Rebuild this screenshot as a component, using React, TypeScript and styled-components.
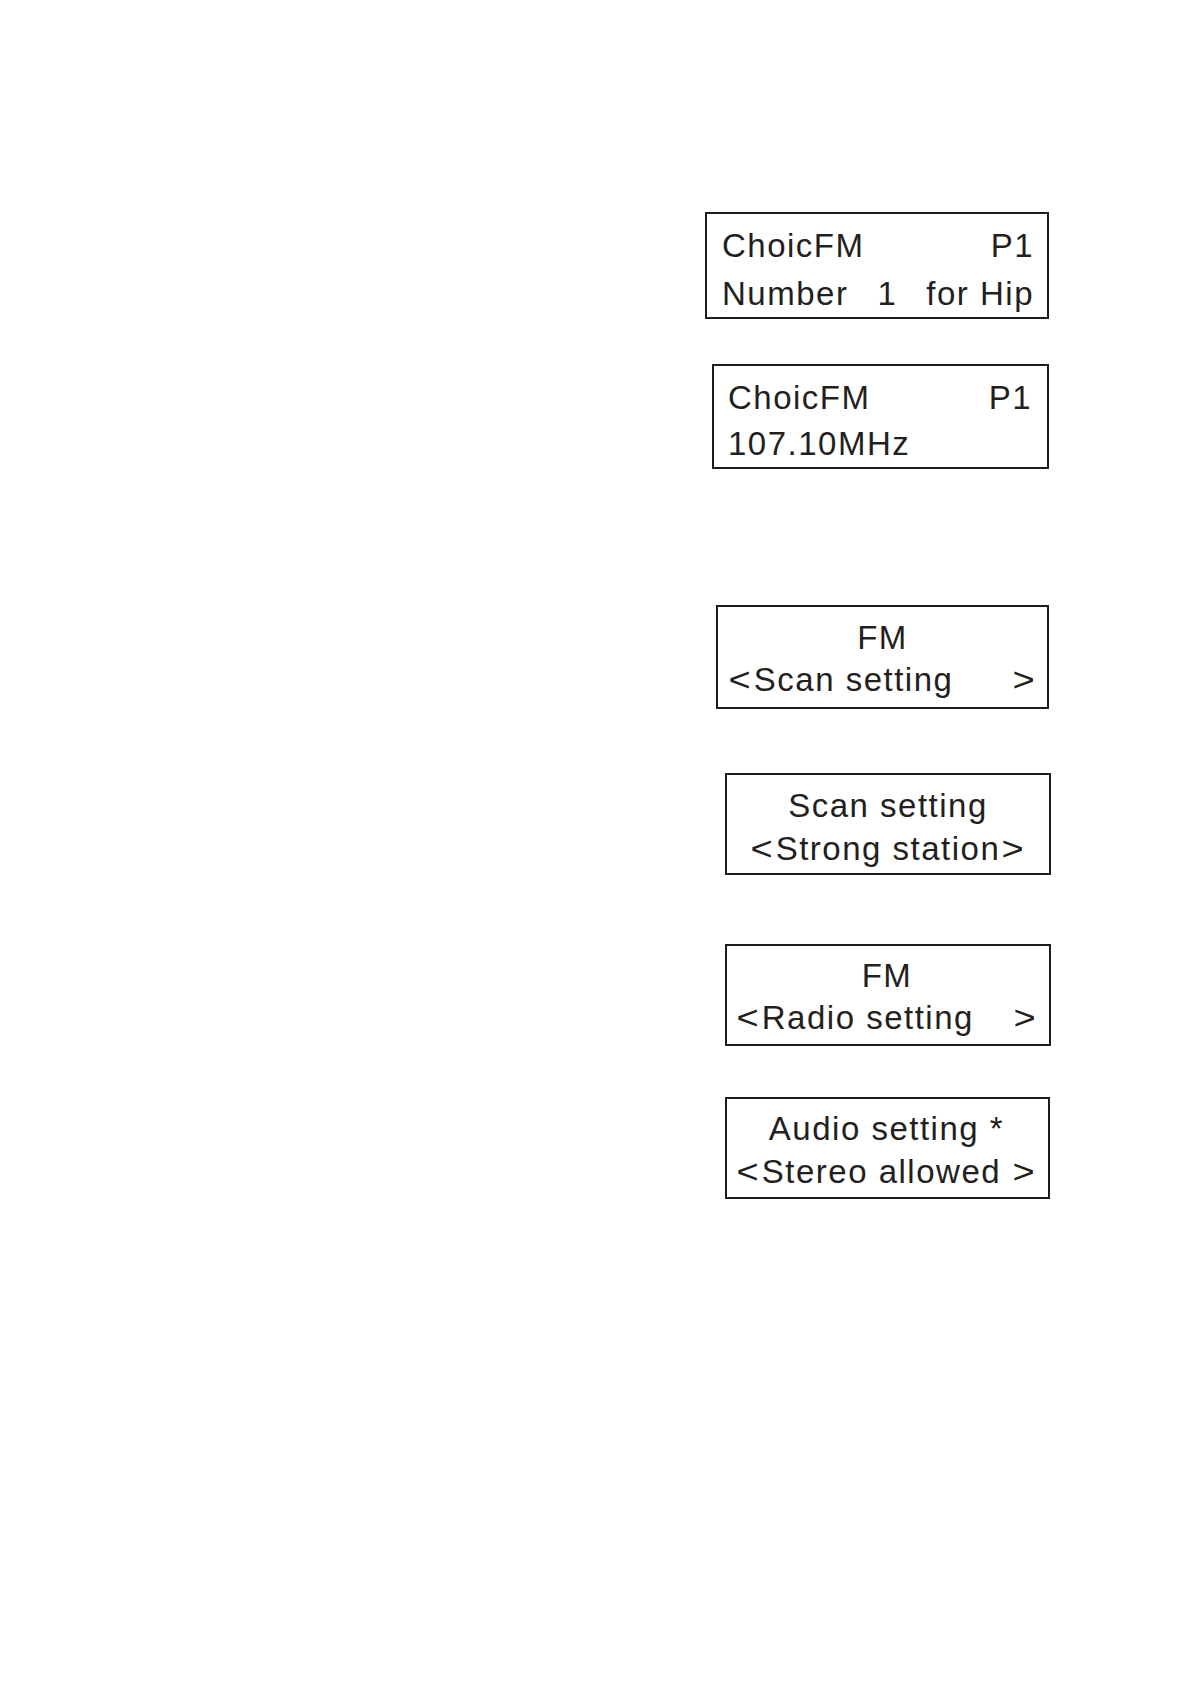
import React from "react";
import styled, { createGlobalStyle } from "styled-components";

const Global = createGlobalStyle`
  html, body { margin: 0; padding: 0; background: #ffffff; }
  body { font-family: "Liberation Sans", Arial, sans-serif; }
`;

const Page = styled.main`
  min-height: 1684px;
  box-sizing: border-box;
  padding: 0 142px 0 0;
  display: flex;
  flex-direction: column;
  align-items: flex-end;
  background: #ffffff;
`;

type BoxProps = {
  $w: number;
  $h: number;
  $mt: number;
  $pt: number;
  $pl: number;
  $pr: number;
  $lh: number;
  $mr: number;
};

const Display = styled.section<BoxProps>`
  box-sizing: border-box;
  width: ${(p) => p.$w}px;
  height: ${(p) => p.$h}px;
  margin-top: ${(p) => p.$mt}px;
  margin-right: ${(p) => p.$mr}px;
  padding: ${(p) => p.$pt}px ${(p) => p.$pr}px 0 ${(p) => p.$pl}px;
  border: 2px solid #1f1c1d;
  display: flex;
  flex-direction: column;
  font-family: "Liberation Sans", Arial, sans-serif;
  font-size: 33px;
  letter-spacing: 1.5px;
  line-height: ${(p) => p.$lh}px;
  color: #231f20;
  overflow: hidden;
`;

const Line = styled.div<{ $align: "split" | "center" | "left" }>`
  display: flex;
  white-space: pre;
  justify-content: ${(p) =>
    p.$align === "split" ? "space-between" : p.$align === "center" ? "center" : "flex-start"};
`;

const Arrow = styled.span`
  display: inline-block;
  transform: scaleX(1.15);
  margin: 0 3px;
`;

type Row = { align: "split" | "center" | "left"; parts: string[] };
type Screen = {
  w: number;
  h: number;
  mt: number;
  pt: number;
  pl: number;
  pr: number;
  lh: number;
  mr: number;
  rows: Row[];
};

const screens: Screen[] = [
  {
    w: 344, h: 107, mt: 212, pt: 8, pl: 15, pr: 13, lh: 48, mr: 0,
    rows: [
      { align: "split", parts: ["ChoicFM", "P1"] },
      { align: "split", parts: ["Number", "1", "for Hip"] },
    ],
  },
  {
    w: 337, h: 105, mt: 45, pt: 9, pl: 14, pr: 15, lh: 46, mr: 0,
    rows: [
      { align: "split", parts: ["ChoicFM", "P1"] },
      { align: "left", parts: ["107.10MHz"] },
    ],
  },
  {
    w: 333, h: 104, mt: 136, pt: 10, pl: 9, pr: 9, lh: 42, mr: 0,
    rows: [
      { align: "center", parts: ["FM"] },
      { align: "split", parts: ["<", "Scan setting", ""] },
    ],
  },
  {
    w: 326, h: 102, mt: 64, pt: 9, pl: 10, pr: 10, lh: 43, mr: -2,
    rows: [
      { align: "center", parts: ["Scan setting"] },
      { align: "center", parts: ["<", "Strong station", ">"] },
    ],
  },
  {
    w: 326, h: 102, mt: 69, pt: 9, pl: 8, pr: 10, lh: 42, mr: -2,
    rows: [
      { align: "center", parts: ["FM"] },
      { align: "split", parts: ["<", "Radio setting", ""] },
    ],
  },
  {
    w: 325, h: 102, mt: 51, pt: 8, pl: 8, pr: 10, lh: 43, mr: -1,
    rows: [
      { align: "center", parts: ["Audio setting *"] },
      { align: "split", parts: ["<", "Stereo allowed", ""] },
    ],
  },
];

const Group = styled.span`
  display: inline-flex;
`;

const Grow = styled.span`
  flex: 1;
`;

function renderRow(r: Row) {
  // rows of the form ["<", text, ""] show a left arrow glued to the text and a right arrow at the end
  if (r.parts[0] === "<") {
    const text = r.parts[1];
    const closing = r.parts[2] === ">";
    if (closing) {
      return (
        <Group>
          <Arrow>{"<"}</Arrow>
          <span>{text}</span>
          <Arrow>{">"}</Arrow>
        </Group>
      );
    }
    return (
      <>
        <Arrow>{"<"}</Arrow>
        <span>{text}</span>
        <Grow />
        <Arrow>{">"}</Arrow>
      </>
    );
  }
  return r.parts.map((t, k) => <span key={k}>{t}</span>);
}

export default function App() {
  return (
    <>
      <Global />
      <Page>
        {screens.map((s, i) => (
          <Display
            key={i}
            $w={s.w}
            $h={s.h}
            $mt={s.mt}
            $pt={s.pt}
            $pl={s.pl}
            $pr={s.pr}
            $lh={s.lh}
            $mr={s.mr}
          >
            {s.rows.map((r, j) => (
              <Line key={j} $align={r.align}>
                {renderRow(r)}
              </Line>
            ))}
          </Display>
        ))}
      </Page>
    </>
  );
}
